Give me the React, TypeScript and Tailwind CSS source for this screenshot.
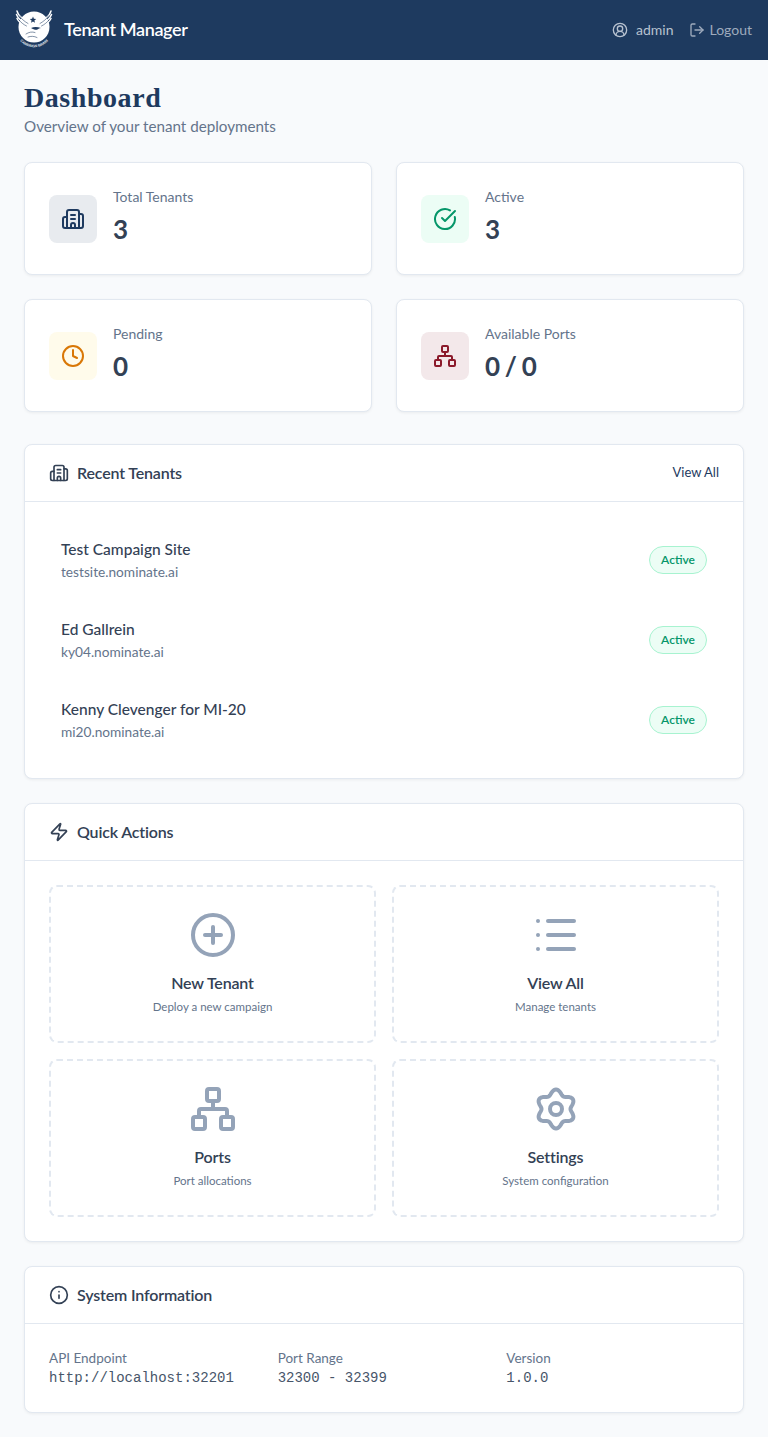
import {
  Building2,
  CircleCheckBig,
  CirclePlus,
  CircleUserRound,
  Clock,
  Info,
  List,
  LogOut,
  Network,
  Zap,
} from "lucide-react";
import type { ComponentType, ReactNode } from "react";

type IconType = ComponentType<{ className?: string }>;

const sans = "font-['Lato','Noto_Sans',sans-serif]";

// six soft lobes, the stock gear has sharper teeth than the picture
const gearPath =
  Array.from({ length: 121 }, (_, i) => {
    const t = (i / 120) * Math.PI * 2;
    const r = 8.5 + 1.25 * Math.cos(6 * t);
    const x = 12 + r * Math.sin(t);
    const y = 12 - r * Math.cos(t);
    return `${i === 0 ? "M" : "L"}${x.toFixed(2)} ${y.toFixed(2)}`;
  }).join("") + "Z";

function Gear({ className }: { className?: string }) {
  return (
    <svg viewBox="0 0 24 24" fill="none" stroke="currentColor" strokeWidth="2" strokeLinejoin="round" className={className}>
      <path d={gearPath} />
      <circle cx="12" cy="12" r="3" />
    </svg>
  );
}

function Logo() {
  return (
    <svg viewBox="0 0 38 40" className="h-[40px] w-[38px] shrink-0">
      <circle cx="19" cy="17" r="15.5" fill="#fff" />
      <g stroke="#fff" strokeWidth="1.5" strokeLinecap="round" fill="none">
        <path d="M2 1c1 4 5 8 11 11" />
        <path d="M1.500 4.500c1.500 4 5 7 10 9.500" />
        <path d="M2 8.500c1.500 3 4 5.500 8 7.500" />
        <path d="M36 1c-1 4-5 8-11 11" />
        <path d="M36.500 4.500c-1.500 4-5 7-10 9.500" />
        <path d="M36 8.500c-1.500 3-4 5.500-8 7.500" />
      </g>
      <g stroke="#1e3a5f" strokeWidth="0.55" strokeLinecap="round" fill="none">
        <path d="M4.500 6c2 3 5 5.500 8.500 7.500" />
        <path d="M4 10c2 2.500 4.500 4.500 7.500 6" />
        <path d="M33.500 6c-2 3-5 5.500-8.500 7.500" />
        <path d="M34 10c-2 2.500-4.500 4.500-7.500 6" />
        <path d="M11 24c3-2 6-2.500 9-1.500M13 27c3-1 6-1 9 .5" />
      </g>
      <path d="M18 6.500l.9 2.200 2.300.2-1.800 1.500.6 2.300-2-1.300-2 1.300.6-2.300-1.800-1.500 2.300-.2Z" fill="#1e3a5f" />
      <path d="M16 18c3-1.500 6-1.500 10 0-2 .3-3 1-4 1.800-2 .2-4-.5-6-1.800Z" fill="#1e3a5f" />
      <path id="logo-arc" d="M1 23a18.500 18.500 0 0 0 36 0" fill="none" />
      <text fontSize="3.600" fontWeight="700" fill="#e8edf3" fontFamily="Liberation Sans, sans-serif">
        <textPath href="#logo-arc" startOffset="50%" textAnchor="middle">
          CAMPAIGN BRAIN
        </textPath>
      </text>
    </svg>
  );
}

function StatCard({
  icon: Icon,
  label,
  value,
  iconClass,
}: {
  icon: IconType;
  label: string;
  value: string;
  iconClass: string;
}) {
  return (
    <div className="flex h-[113px] items-center gap-4 rounded-lg border border-[#e2e8f0] bg-white px-6 shadow-[0_1px_3px_rgba(0,0,0,0.06)]">
      <div className={`flex size-12 shrink-0 items-center justify-center rounded-lg ${iconClass}`}>
        <Icon className="size-6" />
      </div>
      <div className="pb-[5px]">
        <p className="text-sm leading-[21px] text-[#64748b]">{label}</p>
        <p className="mt-[5px] text-[26px] font-bold leading-[34px] tracking-[-0.03em] text-[#334155]">{value}</p>
      </div>
    </div>
  );
}

function Panel({
  icon: Icon,
  title,
  action,
  children,
}: {
  icon: IconType;
  title: string;
  action?: string;
  children: ReactNode;
}) {
  return (
    <section className="mb-6 rounded-lg border border-[#e2e8f0] bg-white shadow-[0_1px_3px_rgba(0,0,0,0.06)]">
      <div className="flex h-[57px] items-center justify-between border-b border-[#e2e8f0] px-6">
        <h2 className="flex items-center gap-2 text-base font-semibold tracking-[-0.01em] text-[#334155]">
          <Icon className="size-5" />
          {title}
        </h2>
        {action ? <a className="text-[13px] text-[#1e3a5f]">{action}</a> : null}
      </div>
      {children}
    </section>
  );
}

function TenantRow({ name, domain }: { name: string; domain: string }) {
  return (
    <div className="flex h-20 items-center justify-between px-3">
      <div>
        <p className="text-[15.500px] font-medium leading-[23px] text-[#334155]">{name}</p>
        <p className="text-[13.700px] leading-[21px] text-[#64748b]">{domain}</p>
      </div>
      <span className="flex h-7 w-[58px] items-center justify-center rounded-full border border-[#a7f3d0] bg-[#ecfdf5] text-xs font-semibold text-[#059669]">
        Active
      </span>
    </div>
  );
}

function ActionTile({ icon: Icon, title, text }: { icon: IconType; title: string; text: string }) {
  return (
    <a className="flex h-[158px] flex-col items-center rounded-lg border-2 border-dashed border-[#e2e8f0] pt-[24px] text-center">
      <Icon className="size-12 text-[#94a3b8]" />
      <p className="mt-3 text-base font-semibold leading-6 tracking-[-0.01em] text-[#334155]">{title}</p>
      <p className="mt-[3px] text-[11.500px] leading-[18px] text-[#64748b]">{text}</p>
    </a>
  );
}

function InfoItem({ label, value }: { label: string; value: string }) {
  return (
    <div>
      <p className="text-[13.500px] leading-5 text-[#64748b]">{label}</p>
      <p className="font-['Liberation_Mono',monospace] text-sm leading-[21px] text-[#475569]">{value}</p>
    </div>
  );
}

export default function App() {
  return (
    <div className={`min-h-screen bg-[#f8fafc] ${sans}`}>
      <header className="flex h-[60px] items-center justify-between bg-[#1e3a5f] pl-[15px] pr-4">
        <div className="flex items-center gap-[11px]">
          <Logo />
          <span className="mb-[2px] text-lg font-semibold tracking-[-0.02em] text-white">Tenant Manager</span>
        </div>
        <div className="mb-px flex items-center gap-4 text-sm text-[#b8c2d0]">
          <span className="flex items-center gap-2">
            <CircleUserRound className="size-4" />
            admin
          </span>
          <a className="flex items-center gap-1 text-[#9fabbd]">
            <LogOut className="size-4" />
            Logout
          </a>
        </div>
      </header>

      <main className="px-6 pt-5">
        <h1 className="font-['Liberation_Serif',serif] text-[28px] font-bold leading-9 tracking-[0.02em] text-[#1e3a5f]">
          Dashboard
        </h1>
        <p className="-mt-px text-[15.200px] leading-[22px] text-[#64748b]">Overview of your tenant deployments</p>

        <div className="mt-[25px] mb-8 grid grid-cols-2 gap-6">
          <StatCard icon={Building2} label="Total Tenants" value="3" iconClass="bg-[#e8ebef] text-[#1e3a5f]" />
          <StatCard icon={CircleCheckBig} label="Active" value="3" iconClass="bg-[#ecfdf5] text-[#059669]" />
          <StatCard icon={Clock} label="Pending" value="0" iconClass="bg-[#fffbeb] text-[#d97706]" />
          <StatCard icon={Network} label="Available Ports" value="0 / 0" iconClass="bg-[#f3e8ea] text-[#8b1a2b]" />
        </div>

        <Panel icon={Building2} title="Recent Tenants" action="View All">
          <div className="px-6 py-[18px]">
            <TenantRow name="Test Campaign Site" domain="testsite.nominate.ai" />
            <TenantRow name="Ed Gallrein" domain="ky04.nominate.ai" />
            <TenantRow name="Kenny Clevenger for MI-20" domain="mi20.nominate.ai" />
          </div>
        </Panel>

        <Panel icon={Zap} title="Quick Actions">
          <div className="grid grid-cols-2 gap-4 p-6">
            <ActionTile icon={CirclePlus} title="New Tenant" text="Deploy a new campaign" />
            <ActionTile icon={List} title="View All" text="Manage tenants" />
            <ActionTile icon={Network} title="Ports" text="Port allocations" />
            <ActionTile icon={Gear} title="Settings" text="System configuration" />
          </div>
        </Panel>

        <Panel icon={Info} title="System Information">
          <div className="grid grid-cols-3 gap-4 px-6 pt-6 pb-[23px]">
            <InfoItem label="API Endpoint" value="http://localhost:32201" />
            <InfoItem label="Port Range" value="32300 - 32399" />
            <InfoItem label="Version" value="1.0.0" />
          </div>
        </Panel>
      </main>
    </div>
  );
}
